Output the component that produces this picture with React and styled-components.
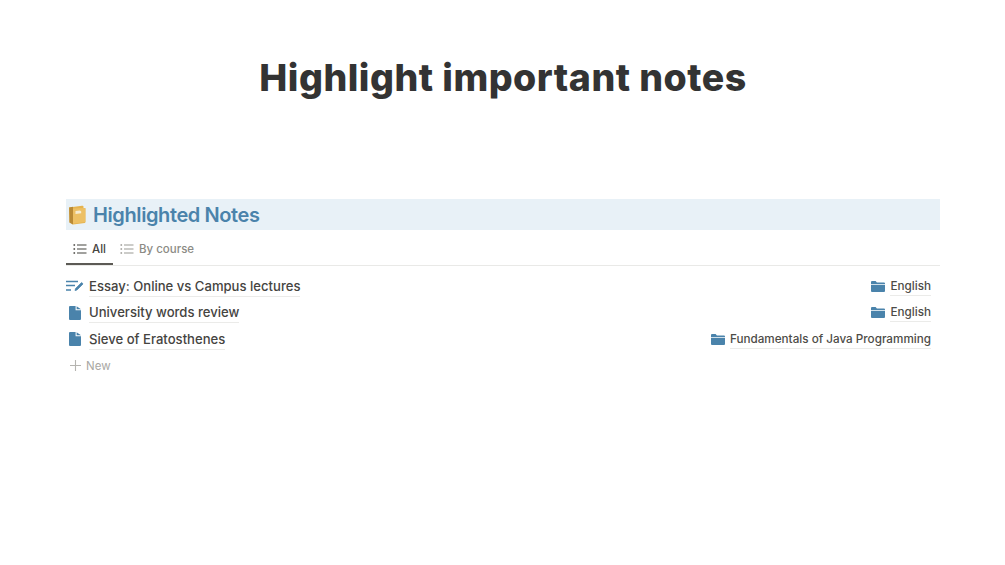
import React from "react";
import styled, { createGlobalStyle } from "styled-components";

const Global = createGlobalStyle`
  html, body { margin: 0; padding: 0; background: #fff; }
  body { width: 1005px; height: 565px; overflow: hidden; font-family: Inter, "Liberation Sans", sans-serif; }
`;

const Page = styled.div`
  display: flex;
  flex-direction: column;
  padding: 0 65px 0 66px;
`;
const Title = styled.h1`
  margin: 55px 0 0;
  height: 144px;
  font-family: Inter, sans-serif;
  font-weight: 800;
  font-size: 37.5px;
  line-height: 46px;
  letter-spacing: 0.5px;
  color: #333333;
  text-align: center;
`;
const Banner = styled.div`
  display: flex;
  align-items: center;
  gap: 5px;
  height: 31px;
  padding-left: 2px;
  background: #e8f1f7;
`;
const BannerText = styled.h2`
  margin: 0 0 0 1px;
  font-size: 20px;
  font-weight: 600;
  letter-spacing: -0.4px;
  color: #4a83ab;
`;
const Tabs = styled.div`
  display: flex;
  height: 35px;
  border-bottom: 1px solid #e9e9e7;
`;
const Tab = styled.div`
  display: flex;
  align-items: center;
  gap: 5px;
  height: 35px;
  box-sizing: border-box;
  padding: 5px 7px 0 7px;
  font-size: 11.5px;
  font-weight: 500;
  color: ${(p) => (p.$active ? "#45443f" : "#8c8b85")};
  border-bottom: 2px solid ${(p) => (p.$active ? "#5c5a55" : "transparent")};
`;
const List = styled.div`
  display: flex;
  flex-direction: column;
  padding-top: 8px;
`;
const Row = styled.div`
  display: flex;
  align-items: center;
  justify-content: space-between;
  height: 26.5px;
  padding-right: 9px;
`;
const Left = styled.div`
  display: flex;
  align-items: center;
  gap: 5px;
`;
const IconBox = styled.span`
  display: flex;
  width: 18px;
  justify-content: center;
  padding-bottom: 2px;
`;
const Name = styled.span`
  font-size: 13.1px;
  font-weight: 500;
  line-height: 16px;
  color: #45443f;
  border-bottom: 1px solid #ebebe9;
  padding-bottom: 2px;
`;
const Course = styled.div`
  display: flex;
  align-items: center;
  gap: 5px;
`;
const FolderBox = styled.span`
  display: flex;
  padding-bottom: 2px;
`;
const CourseName = styled.span`
  font-size: 11.7px;
  font-weight: 500;
  line-height: 14px;
  color: #4d4c47;
  border-bottom: 1px solid #ebebe9;
  padding-bottom: 2px;
`;
const NewRow = styled.div`
  display: flex;
  align-items: center;
  gap: 5px;
  height: 24px;
  padding-left: 4px;
  font-size: 11.5px;
  font-weight: 400;
  color: #a9a8a4;
`;

const ListIcon = ({ color }) => (
  <svg width="14" height="12" viewBox="0 0 14 12" fill="none" stroke={color} strokeWidth="1.2">
    <path d="M4 2h9.500M4 6h9.500M4 10h9.500" />
    <path d="M.5 2h1.600M.5 6h1.600M.5 10h1.600" strokeWidth="1.600" />
  </svg>
);

const EditIcon = () => (
  <svg width="18" height="12" viewBox="0 0 18 12" fill="none" stroke="#4a83ab" strokeWidth="1.400">
    <path d="M0 1.500h12M0 5.500h9M0 10h5" />
    <path d="M9 10.500l.6-2 6-6 1.400 1.400-6 6z" fill="#4a83ab" strokeWidth="0.800" />
  </svg>
);

const DocIcon = () => (
  <svg width="12" height="14" viewBox="0 0 12 14">
    <path d="M0 1a1 1 0 0 1 1-1h5.600v4.200H12V13a1 1 0 0 1-1 1H1a1 1 0 0 1-1-1z" fill="#4a83ab" />
    <path d="M7.600 0.200L12 3.200H7.600z" fill="#4a83ab" />
  </svg>
);

const FolderIcon = () => (
  <svg width="14" height="11" viewBox="0 0 14 11">
    <path d="M0 1a1 1 0 0 1 1-1h3.600l1.300 1.400H13a1 1 0 0 1 1 1V3H0z" fill="#4a83ab" />
    <path d="M0 3.800h14V10a1 1 0 0 1-1 1H1a1 1 0 0 1-1-1z" fill="#4a83ab" />
  </svg>
);

const NotebookIcon = () => (
  <svg width="19" height="20" viewBox="0 0 19 20">
    <path d="M1 2.500L14 .8c1 0 1.500.4 1.500 1V3l2 .2V17c0 .5-.3.8-.8.9L5 19.500 1.500 17.500z" fill="#e5b34e" />
    <path d="M1.200 2.600L5 1.800v17.600l-3.500-2z" fill="#b98a35" />
    <path d="M5 3.400l12.200-.4V17L5 18.800z" fill="#edc064" />
    <path d="M7.500 6l4.500-.6 1.200 1.100v1.700l-5.700.8z" fill="#f6ecd2" />
  </svg>
);

const rows = [
  { icon: <EditIcon />, name: "Essay: Online vs Campus lectures", course: "English" },
  { icon: <DocIcon />, name: "University words review", course: "English" },
  { icon: <DocIcon />, name: "Sieve of Eratosthenes", course: "Fundamentals of Java Programming" },
];

export default function App() {
  return (
    <Page>
      <Global />
      <Title>Highlight important notes</Title>
      <Banner>
        <NotebookIcon />
        <BannerText>Highlighted Notes</BannerText>
      </Banner>
      <Tabs>
        <Tab $active>
          <ListIcon color="#45443f" />
          All
        </Tab>
        <Tab>
          <ListIcon color="#9a9994" />
          By course
        </Tab>
      </Tabs>
      <List>
        {rows.map((r) => (
          <Row key={r.name}>
            <Left>
              <IconBox>{r.icon}</IconBox>
              <Name>{r.name}</Name>
            </Left>
            <Course>
              <FolderBox>
                <FolderIcon />
              </FolderBox>
              <CourseName>{r.course}</CourseName>
            </Course>
          </Row>
        ))}
        <NewRow>
          <svg width="11" height="11" viewBox="0 0 11 11" stroke="#b5b4b0" strokeWidth="1.100">
            <path d="M5.500 0v11M0 5.500h11" />
          </svg>
          New
        </NewRow>
      </List>
    </Page>
  );
}
